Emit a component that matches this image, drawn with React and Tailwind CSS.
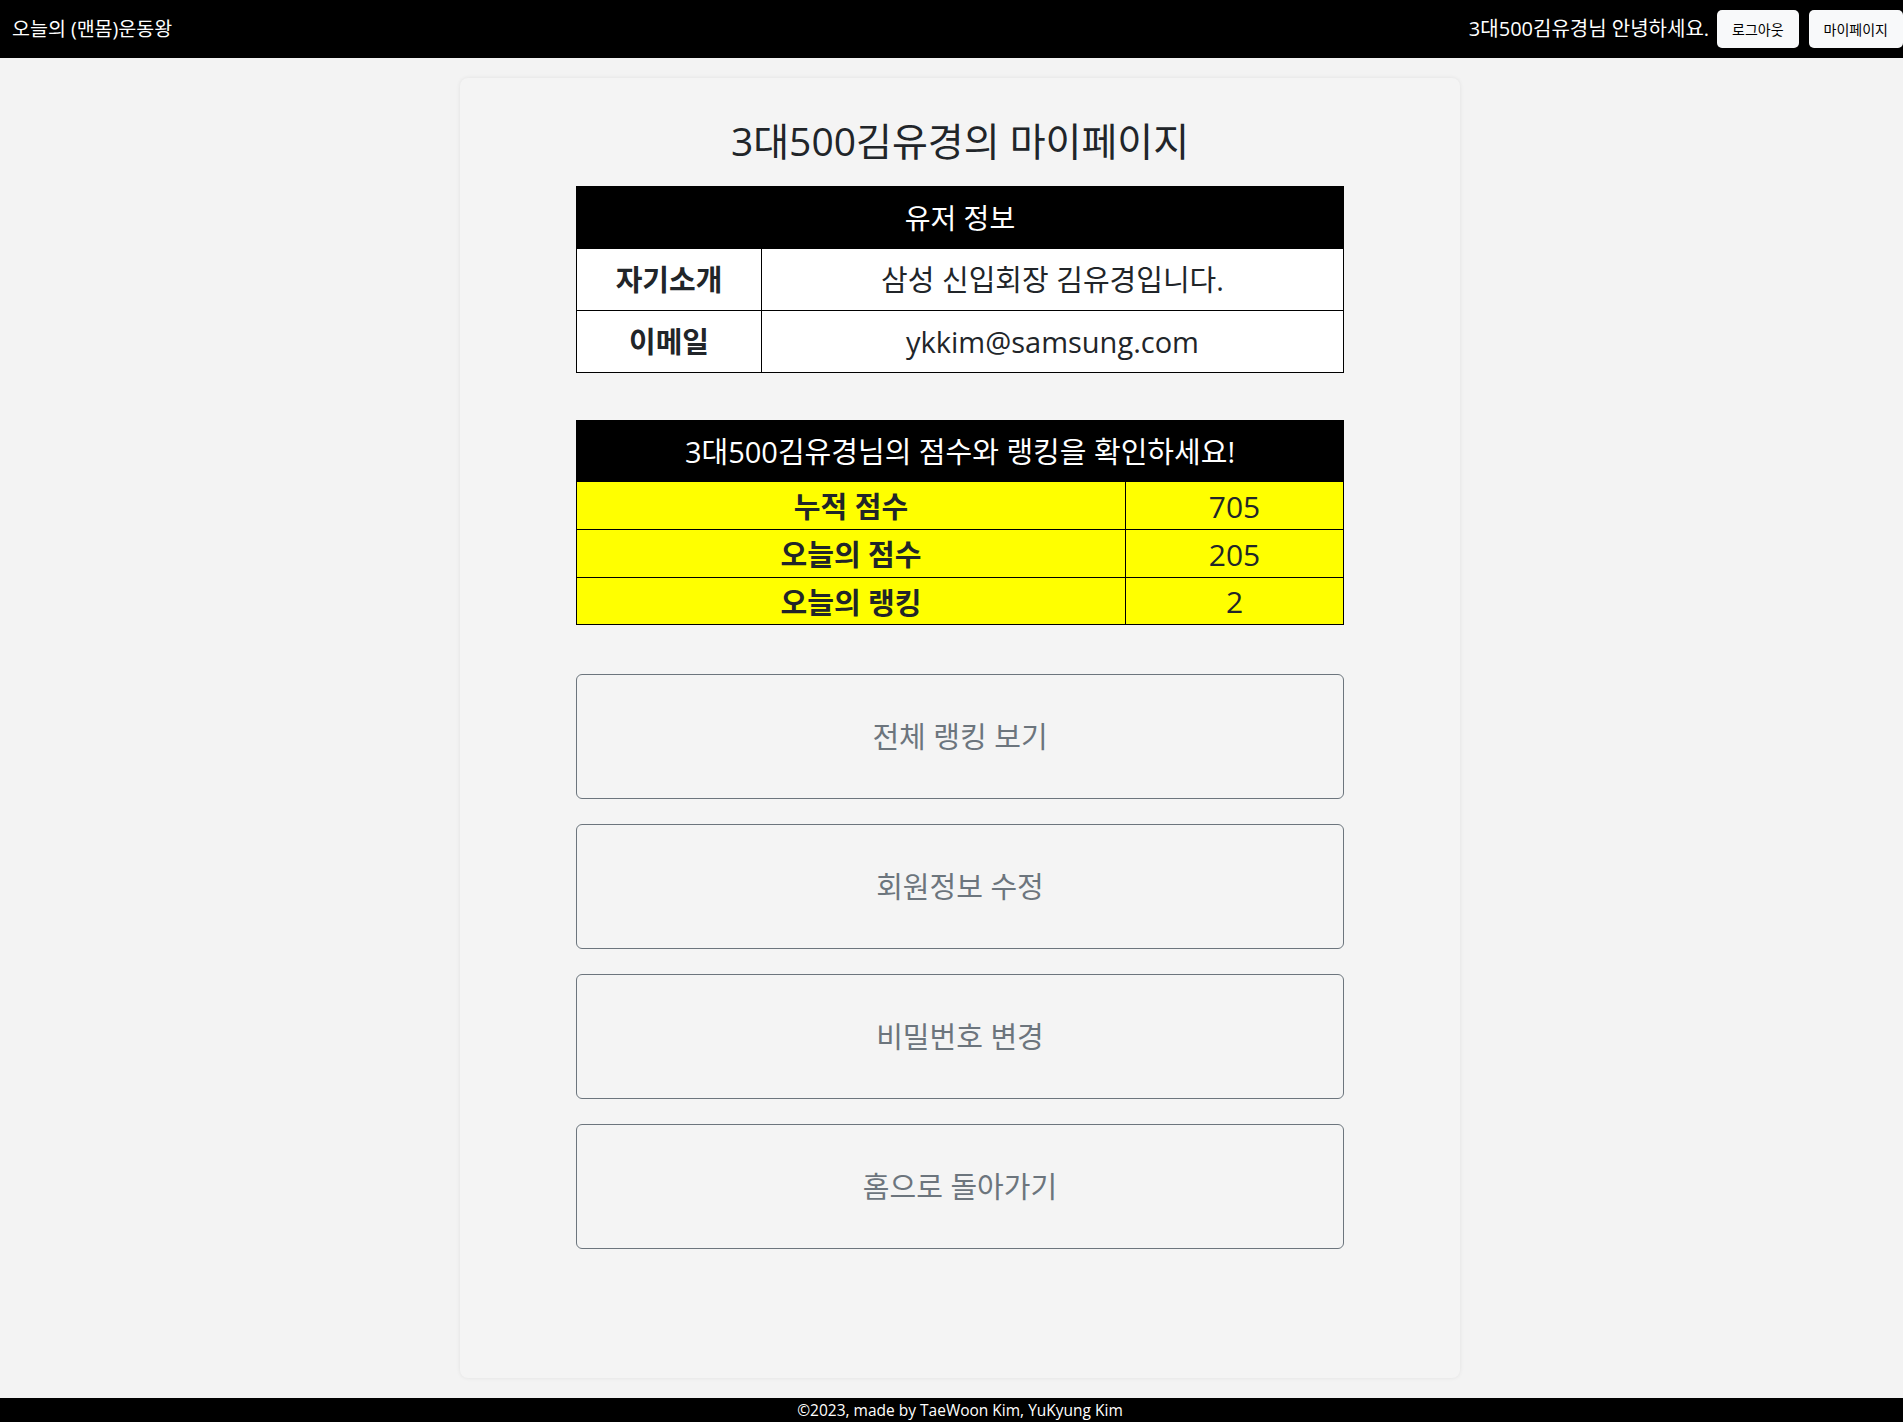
// App.jsx
import React from 'react';

const font = { fontFamily: '"Open Sans", "Noto Sans CJK KR", sans-serif' };

const scores = [
    { label: '누적 점수', value: 705 },
    { label: '오늘의 점수', value: 205 },
    { label: '오늘의 랭킹', value: 2 },
];

const actions = ['전체 랭킹 보기', '회원정보 수정', '비밀번호 변경', '홈으로 돌아가기'];

function Navbar() {
    return (
        <header className="bg-black h-[58px] flex items-center justify-between pl-3">
            <a href="#" className="text-white text-[19.5px]">
                오늘의 (맨몸)운동왕
            </a>
            <div className="flex items-center">
                <span className="text-white text-[20px] mr-2">3대500김유경님 안녕하세요.</span>
                <button className="bg-[#f8f9fa] text-black text-[14px] h-[38px] px-[15px] rounded-[5px] mr-[10px]">
                    로그아웃
                </button>
                <button className="bg-[#f8f9fa] text-black text-[14px] h-[38px] px-[15px] rounded-[5px]">
                    마이페이지
                </button>
            </div>
        </header>
    );
}

function UserInfo() {
    return (
        <table className="w-[768px] mx-auto border-collapse border border-black text-[#212529]">
            <thead>
                <tr className="h-[62px] bg-black">
                    <th colSpan={2} className="text-white text-[28px] font-normal leading-none">유저 정보</th>
                </tr>
            </thead>
            <tbody className="bg-white">
                <tr className="h-[62px]">
                    <td className="w-[185px] border border-black text-center text-[29px] font-bold leading-none">자기소개</td>
                    <td className="border border-black text-center text-[29px] leading-none">삼성 신입회장 김유경입니다.</td>
                </tr>
                <tr className="h-[62px]">
                    <td className="border border-black text-center text-[29px] font-bold leading-none">이메일</td>
                    <td className="border border-black text-center text-[29px] leading-none">ykkim@samsung.com</td>
                </tr>
            </tbody>
        </table>
    );
}

function ScoreTable() {
    return (
        <table className="w-[768px] mx-auto mt-[47px] border-collapse border border-black text-[#212529]">
            <thead>
                <tr className="h-[61px] bg-black">
                    <th colSpan={2} className="text-white text-[29px] font-normal leading-none">
                        3대500김유경님의 점수와 랭킹을 확인하세요!
                    </th>
                </tr>
            </thead>
            <tbody className="bg-[#ffff00]">
                {scores.map((s, i) => (
                    <tr key={s.label} className={i === 2 ? 'h-[47px]' : 'h-[48px]'}>
                        <td className="w-[549px] border border-black text-center text-[29px] font-bold leading-none pt-[2px]">{s.label}</td>
                        <td className="border border-black text-center text-[30px] leading-none pt-[2px]">{s.value}</td>
                    </tr>
                ))}
            </tbody>
        </table>
    );
}

export default function App() {
    return (
        <div className="min-h-screen bg-[#f3f3f3] flex flex-col" style={font}>
            <Navbar />
            <main className="flex-1 py-5 pl-[17px] flex justify-center">
                <div className="w-[1000px] bg-[#f4f4f4] rounded-lg shadow-[0_0_4px_rgba(0,0,0,0.08)] pt-[41px] pb-[127px]">
                    <h1 className="text-center text-[39px] leading-[44px] text-[#212529] mb-[23px]">
                        3대500김유경의 마이페이지
                    </h1>
                    <UserInfo />
                    <ScoreTable />
                    <div className="w-[768px] mx-auto mt-[49px] flex flex-col gap-[25px]">
                        {actions.map((a) => (
                            <button
                                key={a}
                                className="h-[125px] border border-[#6c757d] rounded-[6px] text-[#6c757d] text-[29px]"
                            >
                                {a}
                            </button>
                        ))}
                    </div>
                </div>
            </main>
            <footer className="bg-black h-[24px] pl-[17px] text-white text-[15.5px] leading-[24px] text-center">
                ©2023, made by TaeWoon Kim, YuKyung Kim
            </footer>
        </div>
    );
}
